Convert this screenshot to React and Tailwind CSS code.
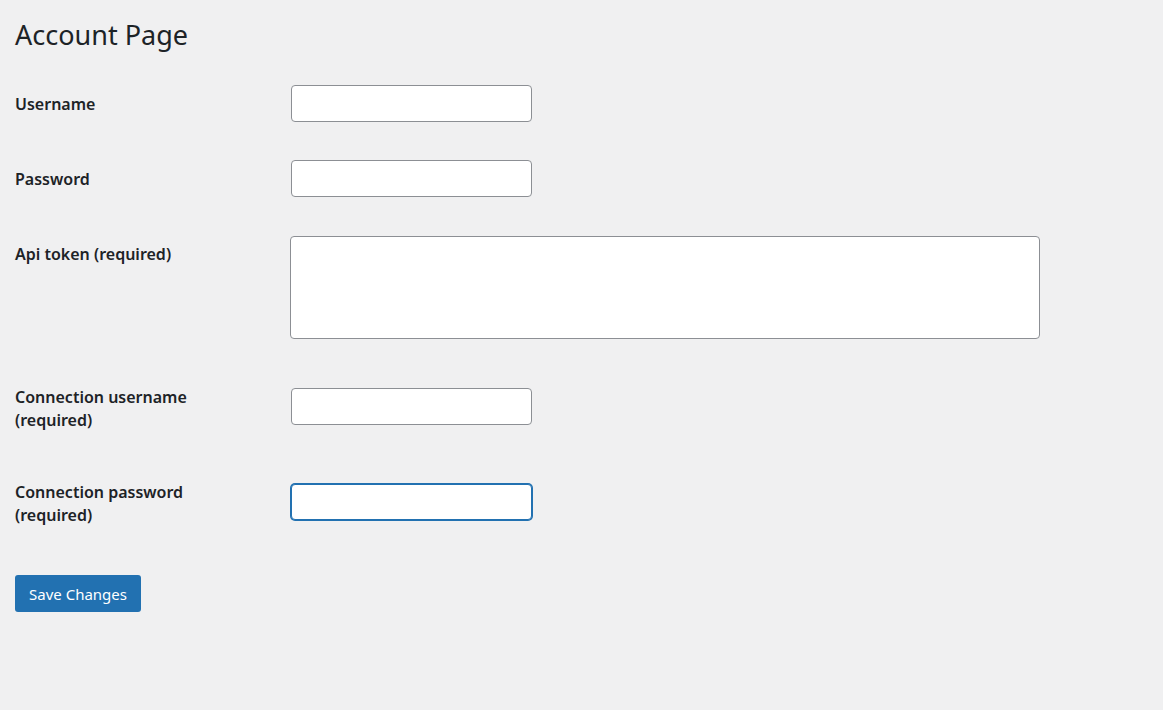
const Row = ({ label, height, labelPad, fieldPad = 'pt-[15px]', children }) => (
  <div className={`flex ${height}`}>
    <div className={`w-[275px] shrink-0 pr-[10px] ${labelPad}`}>
      <label className="block text-[16px] leading-[23px] font-semibold text-[#1d2327]">{label}</label>
    </div>
    <div className={fieldPad}>{children}</div>
  </div>
);

const inputCls =
  'ml-[1px] block w-[241px] h-[37px] rounded-[4px] border border-[#8c8f94] bg-white px-2 text-[14px] text-[#2c3338] outline-none';

const App = () => {
  return (
    <div className="min-h-screen bg-[#f0f0f1] pl-[15px] font-['Noto_Sans','Open_Sans',sans-serif] text-[#1d2327]">
      {/* Title */}
      <h1 className="pt-[18px] text-[27px] leading-[34px] font-normal">Account Page</h1>

      {/* Settings table */}
      <div className="mt-[18px]">
        <Row label="Username" height="h-[75px]" labelPad="pt-[23px]">
          <input type="text" className={inputCls} />
        </Row>
        <Row label="Password" height="h-[76px]" labelPad="pt-[23px]">
          <input type="password" className={inputCls} />
        </Row>
        <Row label="Api token (required)" height="h-[152px]" labelPad="pt-[22px]">
          <textarea className="block w-[750px] h-[103px] resize-none rounded-[4px] border border-[#8c8f94] bg-white px-2 py-1 text-[14px] outline-none" />
        </Row>
        <Row label={<>Connection username<br />(required)</>} height="h-[95px]" labelPad="pt-[13px]">
          <input type="text" className={inputCls} />
        </Row>
        <Row label={<>Connection password<br />(required)</>} height="h-[95px]" labelPad="pt-[13px]" fieldPad="pt-[16px]">
          <input
            type="password"
            className="ml-[1px] block w-[241px] h-[36px] rounded-[4px] border border-[#2271b1] bg-white px-2 text-[14px] outline-none shadow-[0_0_0_1px_#2271b1]"
          />
        </Row>
      </div>

      <button className="mt-[12px] h-[37px] w-[126px] rounded-[3px] bg-[#2271b1] pt-[2px] text-[15px] text-white">
        Save Changes
      </button>
    </div>
  );
};

export default App;
